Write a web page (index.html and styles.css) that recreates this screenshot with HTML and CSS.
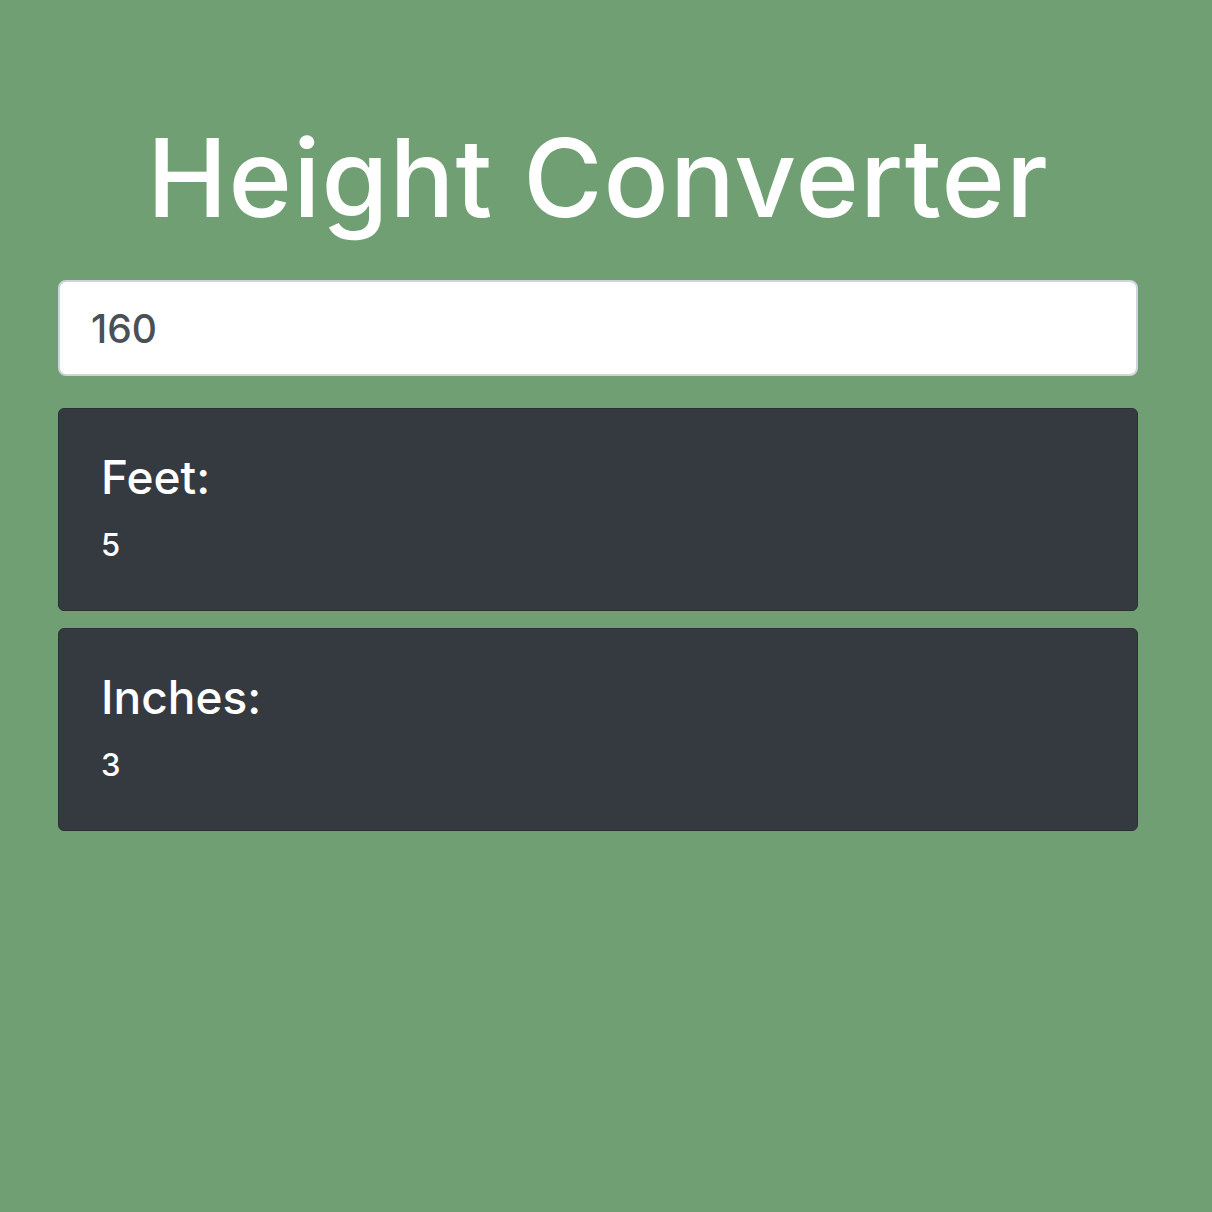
FILE: index.html
```html
<!DOCTYPE html>
<html lang="en">
<head>
<meta charset="utf-8">
<title>Height Converter</title>
<link rel="stylesheet" href="styles.css">
</head>
<body>
<main class="app">
  <h1 class="title">Height Converter</h1>
  <input class="height-input" type="text" value="160">
  <section class="result-card">
    <h2 class="result-label">Feet:</h2>
    <p class="result-value">5</p>
  </section>
  <section class="result-card">
    <h2 class="result-label">Inches:</h2>
    <p class="result-value">3</p>
  </section>
</main>
</body>
</html>
```
FILE: styles.css
```css
* { box-sizing: border-box; }
html, body { margin: 0; padding: 0; }
body {
  background: #6f9f73;
  font-family: Inter, "Open Sans", sans-serif;
  color: #fff;
  height: 1212px;
}
.app {
  width: 1080px;
  margin: 0 0 0 58px;
  padding-top: 108px;
  display: flex;
  flex-direction: column;
}
.title {
  margin: 0 0 32px;
  font-size: 108px;
  font-weight: 450;
  letter-spacing: 1.1px;
  line-height: 140px;
  text-align: center;
  color: #fff;
}
.height-input {
  display: block;
  width: 100%;
  height: 96px;
  padding: 0 31px;
  border: 2px solid #ced4da;
  border-radius: 8px;
  background: #fff;
  font-family: inherit;
  font-size: 39px;
  font-weight: 500;
  color: #495057;
  outline: none;
  margin-bottom: 32px;
}
.result-card {
  background: #343a40;
  border: 1px solid #2b3035;
  border-radius: 6px;
  padding: 40px 42px 48px;
  margin-bottom: 17px;
  height: 203px;
}
.result-label {
  margin: 0;
  font-size: 46px;
  font-weight: 500;
  line-height: 56px;
}
.result-value {
  margin: 20px 0 0;
  font-size: 31px;
  font-weight: 500;
  line-height: 40px;
}
```
